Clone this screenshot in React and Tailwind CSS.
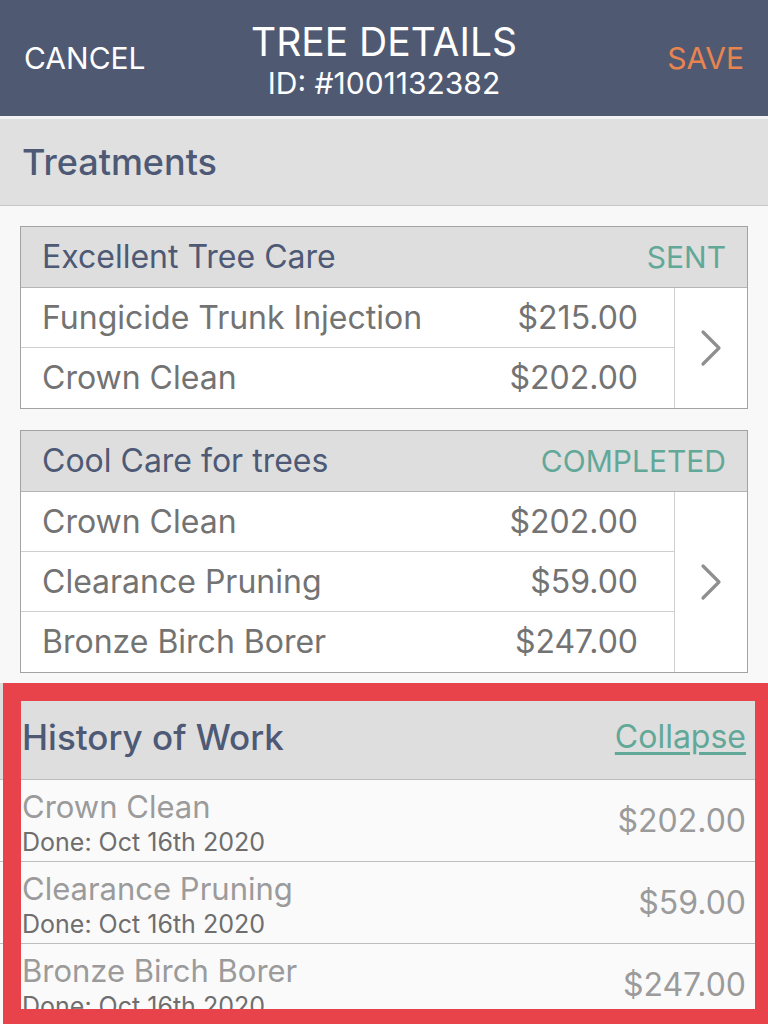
import React from "react";

const font = { fontFamily: "Inter, Roboto, 'Liberation Sans', sans-serif" };

function Chevron() {
  return (
    <svg width="24" height="38" viewBox="0 0 24 38" fill="none">
      <path d="M4 3 L20 19 L4 35" stroke="#8f8f8f" strokeWidth="3.2" strokeLinecap="round" strokeLinejoin="round" />
    </svg>
  );
}

function Card({ title, status, items }) {
  return (
    <div className="border border-[#a3a3a3] bg-white">
      <div className="h-[61px] bg-[#dedede] border-b border-[#b5b5b5] flex items-center justify-between pl-[21px] pr-[21px]">
        <span className="text-[32px] text-[#4d5975]">{title}</span>
        <span className="text-[30px] text-[#62a898]">{status}</span>
      </div>
      <div className="flex">
        <div className="flex-1 flex flex-col">
          {items.map((it, i) => (
            <div
              key={i}
              className={`h-[60px] flex items-center justify-between pl-[21px] pr-[36px] ${i < items.length - 1 ? "border-b border-[#cfcfcf]" : ""}`}
            >
              <span className="text-[32px] text-[#737373]">{it[0]}</span>
              <span className="text-[32px] text-[#737373]">{it[1]}</span>
            </div>
          ))}
        </div>
        <div className="w-[73px] border-l border-[#cfcfcf] flex items-center justify-center">
          <Chevron />
        </div>
      </div>
    </div>
  );
}

function HistoryRow({ name, price, last }) {
  return (
    <div className={`h-[82px] flex items-center justify-between bg-[#fafafa] pl-[22px] pr-[22px] ${last ? "" : "border-b border-[#bdbdbd]"}`}>
      <div className="self-start pt-[9px] flex flex-col leading-none">
        <span className="text-[31px] text-[#9b9b9b] leading-[36px]">{name}</span>
        <span className="text-[25px] text-[#6e6e6e] leading-[34px]">Done: Oct 16th 2020</span>
      </div>
      <span className="text-[32px] text-[#9b9b9b]">{price}</span>
    </div>
  );
}

export default function App() {
  return (
    <div className="relative w-[768px] h-[1024px] overflow-hidden bg-[#f8f8f8]" style={font}>
      <div className="h-[116px] bg-[#4f5a72] flex items-center justify-between px-[24px]">
        <span className="text-[30px] text-white w-[160px]">CANCEL</span>
        <div className="flex flex-col items-center text-white leading-none">
          <span className="text-[39px] mt-[4px]">TREE DETAILS</span>
          <span className="text-[30px] mt-[7px]">ID: #1001132382</span>
        </div>
        <span className="text-[30px] text-[#e8844f] w-[160px] text-right">SAVE</span>
      </div>
      <div className="h-[3px] bg-[#f2f2f2]" />
      <div className="h-[87px] bg-[#e0e0e0] border-b border-[#c6c6c6] flex items-center pl-[22px]">
        <span className="text-[36px] font-medium text-[#4d5975]">Treatments</span>
      </div>
      <div className="px-[20px] pt-[20px] flex flex-col gap-[21px]">
        <Card
          title="Excellent Tree Care"
          status="SENT"
          items={[
            ["Fungicide Trunk Injection", "$215.00"],
            ["Crown Clean", "$202.00"],
          ]}
        />
        <Card
          title="Cool Care for trees"
          status="COMPLETED"
          items={[
            ["Crown Clean", "$202.00"],
            ["Clearance Pruning", "$59.00"],
            ["Bronze Birch Borer", "$247.00"],
          ]}
        />
      </div>
      <div className="mt-[10px]">
        <div className="h-[97px] bg-[#dedede] border-b border-[#bdbdbd] flex items-center justify-between pl-[22px] pr-[22px] pt-[12px]">
          <span className="text-[35px] font-medium text-[#4d5975]">History of Work</span>
          <span className="text-[32px] text-[#62a898] underline underline-offset-[4px]">Collapse</span>
        </div>
        <HistoryRow name="Crown Clean" price="$202.00" />
        <HistoryRow name="Clearance Pruning" price="$59.00" />
        <HistoryRow name="Bronze Birch Borer" price="$247.00" last />
      </div>
      <div className="absolute left-[3px] top-[683px] w-[770px] h-[344px] border-[18px] border-[#e8434b] pointer-events-none" />
    </div>
  );
}
